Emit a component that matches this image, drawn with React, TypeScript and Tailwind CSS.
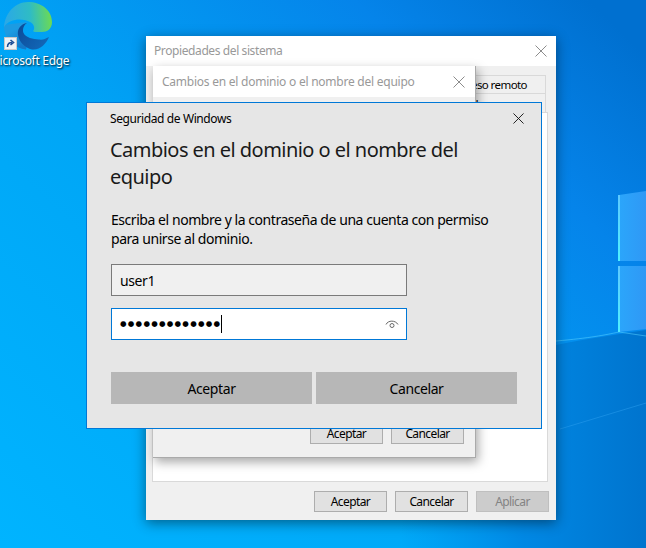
const uiFont = "font-['Noto_Sans',sans-serif] tracking-[-0.025em]";

const CloseIcon = ({ color, size = 12 }: { color: string; size?: number }) => (
  <svg width={size} height={size} viewBox="0 0 12 12" fill="none" stroke={color} strokeWidth="1">
    <path d="M0.5 0.5 L11.5 11.5 M11.5 0.5 L0.5 11.5" />
  </svg>
);

const EyeIcon = () => (
  <svg width="14" height="12" viewBox="0 0 14 12" fill="none" stroke="#6a6a6a" strokeWidth="1">
    <path d="M1 6.5 C3 2 10.5 2 13 6.5" />
    <circle cx="7" cy="7.5" r="2" />
  </svg>
);

const EdgeLogo = () => (
  <svg className="absolute left-[4px] top-[2px]" width="48" height="48" viewBox="0 0 48 48">
    <defs>
      <linearGradient id="edgeTop" x1="0" y1="0.5" x2="1" y2="0.45">
        <stop offset="0" stopColor="#2aa8e8" />
        <stop offset="0.55" stopColor="#2fbcc4" />
        <stop offset="1" stopColor="#6fdb4f" />
      </linearGradient>
      <linearGradient id="edgeBase" x1="0.2" y1="0.4" x2="0.5" y2="1">
        <stop offset="0" stopColor="#1c9be2" />
        <stop offset="1" stopColor="#1478c8" />
      </linearGradient>
      <linearGradient id="edgeWave" x1="0" y1="0" x2="1" y2="0.6">
        <stop offset="0" stopColor="#0c4a98" />
        <stop offset="1" stopColor="#1267b6" />
      </linearGradient>
    </defs>
    <path d="M0 23 C-1 36 10 46 22 47.500 L24 40 L14 30 L23 20 Z" fill="url(#edgeBase)" />
    <path d="M23 21 C16 22 13 28 14 33 C15 40 21 46 28 47.500 C36 48.500 42 42 45 35 C41 37 39 38 35 37.500 C29 37 22 36 19.500 31 C18 27 20 23 23 21 Z" fill="url(#edgeWave)" />
    <path d="M24 0 C37 0 48 8 48 20 C48 27 43 30 38 30 C34 30 30 30.500 29 29 C31 27 30.500 23 27 20.500 C19 16 6 16 0 25 C1 11 11 0 24 0 Z" fill="url(#edgeTop)" />
  </svg>
);

const Wallpaper = () => (
  <svg className="absolute inset-0" width="646" height="548" viewBox="0 0 646 548">
    <defs>
      <linearGradient id="bg" x1="0" y1="1" x2="1" y2="0.1">
        <stop offset="0" stopColor="#00b4ff" />
        <stop offset="0.45" stopColor="#00a6f6" />
        <stop offset="0.8" stopColor="#0584ea" />
        <stop offset="1" stopColor="#0070d0" />
      </linearGradient>
      <linearGradient id="low" x1="0" y1="0" x2="1" y2="0">
        <stop offset="0" stopColor="#0090ea" stopOpacity="0" />
        <stop offset="0.5" stopColor="#0088e4" />
        <stop offset="1" stopColor="#0074ce" />
      </linearGradient>
      <linearGradient id="pane" x1="0" y1="0" x2="1" y2="0">
        <stop offset="0" stopColor="#2ba6fb" />
        <stop offset="1" stopColor="#2f98f5" />
      </linearGradient>
      <linearGradient id="glow" x1="0" y1="0" x2="0" y2="1">
        <stop offset="0" stopColor="#5cc8ff" />
        <stop offset="1" stopColor="#4ff0ff" />
      </linearGradient>
    </defs>
    <rect width="646" height="548" fill="url(#bg)" />
    <path d="M556 345 C590 338 620 334 646 330 L646 548 L400 548 L400 400 Z" fill="url(#low)" />
    <path d="M619 195 L646 191 L646 261 L619 261 Z" fill="url(#pane)" />
    <path d="M619 266 L646 266 L646 329 L619 332 Z" fill="url(#pane)" />
    <rect x="618" y="195" width="2" height="66" fill="url(#glow)" />
    <rect x="618" y="266" width="2" height="66" fill="url(#glow)" />
    <path d="M556 341 C590 338 605 335 619 332 L646 336" fill="none" stroke="#55d0ff" strokeOpacity="0.55" />
    <path d="M560 429 L646 403" fill="none" stroke="#2ba0f0" strokeOpacity="0.5" />
  </svg>
);

const LegacyButton = ({ label, disabled = false }: { label: string; disabled?: boolean }) => (
  <div
    className={
      disabled
        ? "flex h-[21px] w-[73px] items-center justify-center border border-[#bfbfbf] bg-[#cccccc] text-[12px] tracking-[-0.05em] text-[#838383]"
        : "flex h-[21px] w-[73px] items-center justify-center border border-[#adadad] bg-[#e1e1e1] text-[12px] tracking-[-0.05em] text-black"
    }
  >
    {label}
  </div>
);

const SystemWindow = () => (
  <div className={`absolute left-[146px] top-[36px] flex h-[484px] w-[410px] flex-col bg-[#f0f0f0] shadow-[0_3px_12px_rgba(0,0,0,0.45)] ${uiFont}`}>
    <div className="flex h-[30px] items-center justify-between bg-white pl-2 pr-[9px]">
      <span className="text-[12px] text-[#999999]">Propiedades del sistema</span>
      <CloseIcon color="#8c8c8c" />
    </div>
    <div className="flex h-[46px] flex-col items-end pr-[10px] pt-[9px]">
      <div className="flex h-[19px] w-[110px] items-center justify-end border border-[#d9d9d9] pr-[18px] text-[11.5px] tracking-[-0.05em] text-black">
        <span className="whitespace-nowrap">Acceso remoto</span>
      </div>
      <div className="h-[18px] w-[110px] border-r border-[#d9d9d9] pl-[16px] pt-[4px] text-[12px] leading-[16px] text-black">
        Hardware
      </div>
    </div>
    <div className="ml-[6px] mr-[8px] h-[370px] border border-[#d9d9d9] bg-white" />
    <div className="flex justify-end gap-2 pr-[7px] pt-[9px]">
      <LegacyButton label="Aceptar" />
      <LegacyButton label="Cancelar" />
      <LegacyButton label="Aplicar" disabled />
    </div>
  </div>
);

const DomainDialog = () => (
  <div className={`absolute left-[153px] top-[66px] flex h-[392px] w-[323px] flex-col border-b border-r border-[#aaaaaa] bg-[#f0f0f0] shadow-[2px_4px_10px_rgba(0,0,0,0.35)] ${uiFont}`}>
    <div className="flex h-[31px] items-center justify-between bg-white pl-[9px] pr-[10px]">
      <span className="text-[12px] tracking-[-0.02em] text-[#999999]">Cambios en el dominio o el nombre del equipo</span>
      <CloseIcon color="#8c8c8c" />
    </div>
    <div className="flex flex-1 items-end justify-end gap-2 pb-[13px] pr-[11px]">
      <LegacyButton label="Aceptar" />
      <LegacyButton label="Cancelar" />
    </div>
  </div>
);

const SecurityDialog = () => (
  <div className={`absolute left-[86px] top-[102px] flex h-[327px] w-[456px] flex-col border border-[#0078d7] bg-[#e6e6e6] text-black ${uiFont}`}>
    <div className="flex h-[31px] items-center justify-between pl-[23px] pr-[17px]">
      <span className="text-[12px]">Seguridad de Windows</span>
      <CloseIcon color="#111111" size={11} />
    </div>
    <div className="mt-[2px] pl-[23px] pr-[60px] text-[20px] leading-[27px] tracking-[-0.027em] text-[#1a1a1a]">
      Cambios en el dominio o el nombre del equipo
    </div>
    <div className="mt-[20px] pl-[24px] pr-[40px] text-[14px] leading-[19px] tracking-[-0.032em]">
      Escriba el nombre y la contraseña de una cuenta con permiso para unirse al dominio.
    </div>
    <div className="ml-[24px] mt-[16px] flex h-[32px] w-[296px] items-center border border-[#7a7a7a] bg-[#f0f0f0] pl-2 text-[14px]">
      user1
    </div>
    <div className="ml-[24px] mt-[12px] flex h-[32px] w-[296px] items-center justify-between border border-[#0078d7] bg-white pl-2 pr-[7px]">
      <div className="flex items-center">
        <span className="font-['DejaVu_Sans',sans-serif] text-[7.5px] leading-none tracking-[1.25px]">●●●●●●●●●●●●●</span>
        <span className="h-[18px] w-px bg-black" />
      </div>
      <EyeIcon />
    </div>
    <div className="ml-[24px] mt-[32px] flex gap-1">
      <div className="flex h-[32px] w-[201px] items-center justify-center bg-[#b7b7b7] text-[14px]">Aceptar</div>
      <div className="flex h-[32px] w-[201px] items-center justify-center bg-[#b7b7b7] text-[14px]">Cancelar</div>
    </div>
  </div>
);

export default function App() {
  return (
    <div className="relative h-[548px] w-[646px] overflow-hidden">
      <Wallpaper />
      <EdgeLogo />
      <div className="absolute left-[4px] top-[37px] flex h-[13px] w-[13px] items-center justify-center border border-[#c8c8c8] bg-[#eef2f6]">
        <svg width="9" height="9" viewBox="0 0 9 9" fill="none">
          <path d="M1.5 8 C1.5 4.5 3.5 3.5 6 3.5 M4.5 1 L7.5 3.5 L4.5 6" stroke="#1f4f96" strokeWidth="1.6" />
        </svg>
      </div>
      <div className={`absolute left-[-11px] top-[53px] whitespace-nowrap text-[12px] leading-[16px] tracking-[-0.04em] text-white [text-shadow:1px_1px_2px_rgba(0,0,0,0.9)] ${uiFont}`}>
        Microsoft Edge
      </div>
      <SystemWindow />
      <DomainDialog />
      <SecurityDialog />
    </div>
  );
}
